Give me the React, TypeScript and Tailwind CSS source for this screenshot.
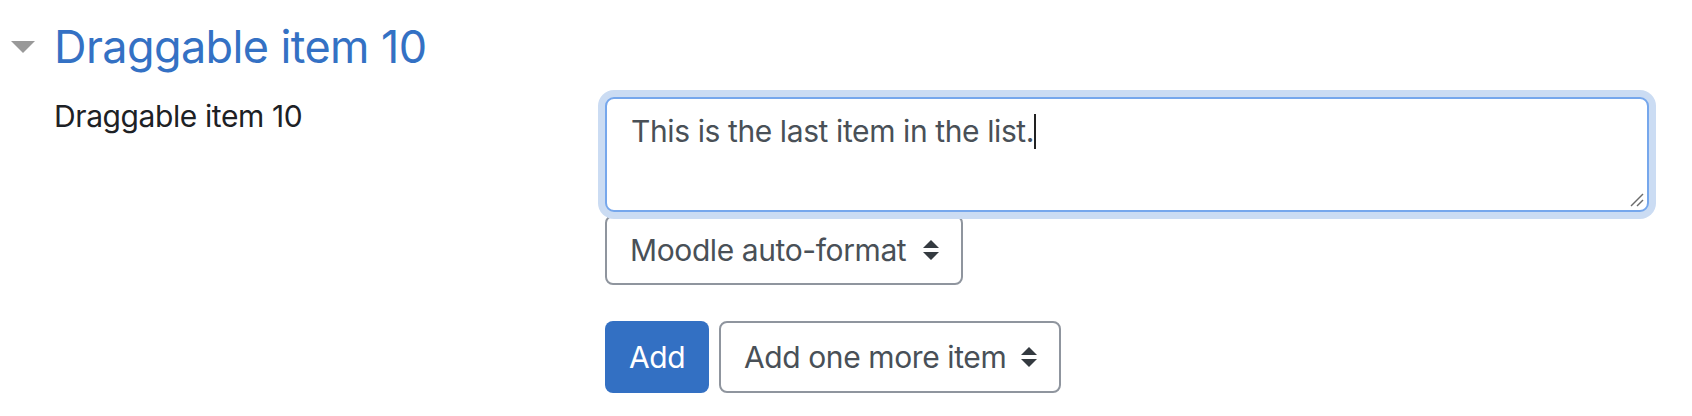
import React from 'react';

const FONT = { fontFamily: 'Inter, "Liberation Sans", Arial, sans-serif' };

function SortArrows() {
  return (
    <svg width="16" height="20" viewBox="0 0 4 5" className="shrink-0">
      <path d="M2 0L0 2h4zm0 5L0 3h4z" fill="#343a40" />
    </svg>
  );
}

function SelectBox({ label, width, height }: { label: string; width: string; height: string }) {
  return (
    <div
      className={`flex items-center justify-between rounded-[8px] border-2 border-[#8f959e] bg-white pl-[23px] pr-[22px] text-[30px] leading-[45px] text-[#495057] ${width} ${height}`}
    >
      <span className="tracking-[-0.4px]">{label}</span>
      <SortArrows />
    </div>
  );
}

export default function App() {
  return (
    <div className="min-h-[416px] w-[1692px] bg-white" style={FONT}>
      {/* collapsible fieldset header */}
      <div className="flex items-center pt-[20px]">
        <svg width="24" height="12" viewBox="0 0 24 12" className="ml-[11px] shrink-0">
          <polygon points="0,0 24,0 12,12" fill="#999999" />
        </svg>
        <h3 className="ml-[19px] text-[45px] leading-[54px] font-normal tracking-[-0.6px] text-[#3471c4]">
          Draggable item 10
        </h3>
      </div>

      {/* form row */}
      <div className="mt-[23px] flex pl-[54px]">
        <div className="w-[551px] shrink-0 pt-[1px] text-[30px] leading-[37px] tracking-[-0.4px] text-[#1d2125]">
          Draggable item 10
        </div>

        <div className="flex flex-col items-start">
          <div className="relative h-[115px] w-[1044px] rounded-[9px] border-2 border-[#76a7ec] bg-white px-[24px] pt-[10px] text-[30px] leading-[45px] text-[#495057] shadow-[0_0_0_7px_#cbdcf3]">
            <span className="tracking-[-0.4px]">This is the last item in the list.</span>
            <span className="inline-block h-[35px] w-[2px] bg-[#222222] align-[-7px]" />
            <svg width="14" height="14" viewBox="0 0 14 14" className="absolute right-[3px] bottom-[3px]">
              <line x1="13" y1="1" x2="1" y2="13" stroke="#6b6b6b" strokeWidth="1.5" />
              <line x1="13" y1="7" x2="7" y2="13" stroke="#6b6b6b" strokeWidth="1.5" />
            </svg>
          </div>

          <div className="mt-[3px]">
            <SelectBox label="Moodle auto-format" width="w-[358px]" height="h-[70px]" />
          </div>

          <div className="mt-[36px] flex gap-[10px]">
            <button className="h-[72px] w-[104px] rounded-[8px] bg-[#3370c3] text-[30px] leading-[45px] tracking-[-0.4px] text-white">
              Add
            </button>
            <SelectBox label="Add one more item" width="w-[342px]" height="h-[72px]" />
          </div>
        </div>
      </div>
    </div>
  );
}
